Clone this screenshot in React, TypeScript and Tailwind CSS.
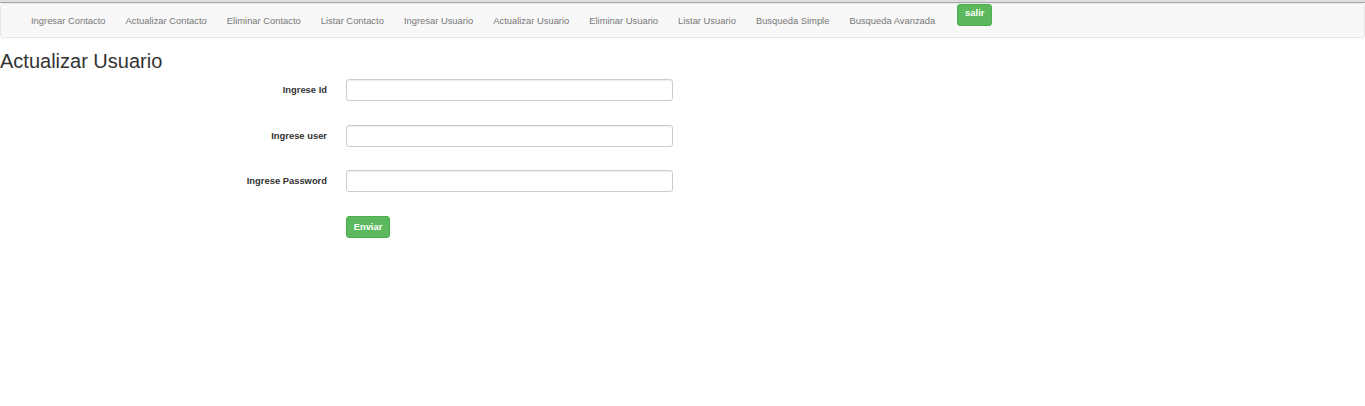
import React from "react";

const links = [
  "Ingresar Contacto",
  "Actualizar Contacto",
  "Eliminar Contacto",
  "Listar Contacto",
  "Ingresar Usuario",
  "Actualizar Usuario",
  "Eliminar Usuario",
  "Listar Usuario",
  "Busqueda Simple",
  "Busqueda Avanzada",
];

const fields = [
  { label: "Ingrese Id", type: "text", gap: "mb-[24px]" },
  { label: "Ingrese user", type: "text", gap: "mb-[23px]" },
  { label: "Ingrese Password", type: "password", gap: "mb-[24px]" },
];

export default function App() {
  return (
    <div className="w-[1365px] h-[406px] bg-white text-[#333] font-['Liberation_Sans',Arial,sans-serif] overflow-hidden">
      {/* top strip */}
      <div className="h-[2px] bg-[#dedede]" />
      <div className="h-[1px] bg-[#a8a8a8]" />

      <nav className="h-[35px] flex items-start bg-[#f8f8f8] border border-[#e7e7e7] rounded-[3px] pl-[20px]">
        <ul className="flex h-[33px] items-center">
          {links.map((l, i) => (
            <li key={i}>
              <a href="#" className="block px-[10px] text-[9.4px] leading-[33px] text-[#777]">
                {l}
              </a>
            </li>
          ))}
        </ul>
        <button className="ml-[12px] h-[22px] w-[35px] bg-[#5cb85c] border border-[#4cae4c] rounded-[3px] text-white text-[9.4px] font-bold leading-none pb-[4px]">
          salir
        </button>
      </nav>

      <h1 className="mt-[12px] text-[20px] leading-[22px] text-[#333]">Actualizar Usuario</h1>

      <form className="mt-[7px]">
        {fields.map((f, i) => (
          <div key={i} className={"flex items-center h-[22px] " + f.gap}>
            <label className="w-[327px] text-right text-[9.4px] font-bold text-[#333]">{f.label}</label>
            <input
              type={f.type}
              className="ml-[19px] w-[327px] h-[22px] border border-[#ccc] rounded-[3px] bg-white shadow-[inset_0_1px_1px_rgba(0,0,0,0.075)] px-2 text-[9.4px] outline-none"
            />
          </div>
        ))}
        <div className="flex">
          <button
            type="button"
            className="ml-[346px] h-[22px] w-[44px] bg-[#5cb85c] border border-[#4cae4c] rounded-[3px] text-white text-[9.4px] font-bold"
          >
            Enviar
          </button>
        </div>
      </form>
    </div>
  );
}
